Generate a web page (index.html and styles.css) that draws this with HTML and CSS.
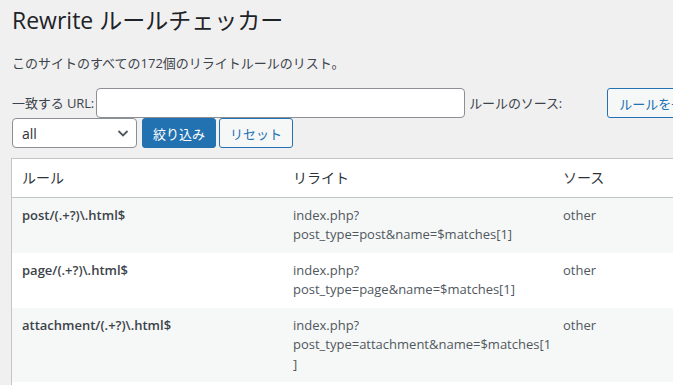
FILE: index.html
```html
<!DOCTYPE html>
<html lang="ja">
<head>
  <meta charset="UTF-8" />
  <title>Rewrite ルールチェッカー</title>
  <link rel="stylesheet" href="styles.css">
</head>
<body>
  <div class="wrap">
    <h1>Rewrite ルールチェッカー</h1>
    <p class="intro">このサイトのすべての172個のリライトルールのリスト。</p>

    <form class="filters">
      <div class="row">
        <label for="url">一致する URL:</label>
        <input type="text" id="url" class="url-input">
        <label for="source" class="source-label">ルールのソース:</label>
        <button type="button" class="btn btn-secondary btn-flush">ルールを一新</button>
      </div>
      <div class="row">
        <div class="select-box">
          <select id="source">
            <option>all</option>
          </select>
          <svg class="chevron" width="16" height="16" viewBox="0 0 16 16"><path d="M3.5 6 L8 10.5 L12.5 6" fill="none" stroke="#50575e" stroke-width="1.8"/></svg>
        </div>
        <button type="button" class="btn btn-primary">絞り込み</button>
        <button type="button" class="btn btn-secondary">リセット</button>
      </div>
    </form>

    <table class="rules">
      <thead>
        <tr>
          <th class="col-rule">ルール</th>
          <th class="col-rewrite">リライト</th>
          <th class="col-source">ソース</th>
        </tr>
      </thead>
      <tbody>
        <tr class="alt">
          <td class="rule">post/(.+?)\.html$</td>
          <td>index.php?<br>post_type=post&amp;name=$matches[1]</td>
          <td>other</td>
        </tr>
        <tr>
          <td class="rule">page/(.+?)\.html$</td>
          <td>index.php?<br>post_type=page&amp;name=$matches[1]</td>
          <td>other</td>
        </tr>
        <tr class="alt">
          <td class="rule">attachment/(.+?)\.html$</td>
          <td>index.php?<br>post_type=attachment&amp;name=$matches[1<br>]</td>
          <td>other</td>
        </tr>
        <tr>
          <td class="rule">&nbsp;</td>
          <td>&nbsp;</td>
          <td>&nbsp;</td>
        </tr>
      </tbody>
    </table>
  </div>
</body>
</html>
```

FILE: styles.css
```css
html, body {
  margin: 0;
  padding: 0;
  overflow: hidden;
}
body {
  background: #f0f0f1;
  color: #3c434a;
  font-family: "Open Sans", "Noto Sans CJK JP", sans-serif;
  font-size: 13px;
  line-height: 1.4;
}
.wrap {
  padding: 0 0 0 11px;
  width: 900px;
}
h1 {
  font-size: 23px;
  font-weight: 400;
  color: #1d2327;
  margin: 0;
  padding: 6px 0 0 1px;
  line-height: 1.3;
}
.intro {
  margin: 18px 0 0 1px;
}
.filters {
  margin: 16px 0 0 1px;
}
.row {
  display: flex;
  align-items: center;
}
.row label {
  margin-right: 2px;
  letter-spacing: -0.1px;
}
.url-input {
  width: 369px;
  height: 30px;
  box-sizing: border-box;
  border: 1px solid #8c8f94;
  border-radius: 4px;
  background: #fff;
  margin: 0 4px 0 0;
}
.source-label {
  width: 136px;
}
.select-box {
  position: relative;
  width: 125px;
  height: 30px;
}
.select-box select {
  appearance: none;
  width: 100%;
  height: 30px;
  box-sizing: border-box;
  border: 1px solid #8c8f94;
  border-radius: 4px;
  background: #fff;
  color: #2c3338;
  font-family: inherit;
  font-size: 14px;
  padding: 0 24px 0 9px;
}
.chevron {
  position: absolute;
  right: 6px;
  top: 7px;
  pointer-events: none;
}
.btn {
  height: 30px;
  box-sizing: border-box;
  border-radius: 3px;
  font-family: inherit;
  font-size: 13px;
  padding: 0 10px;
  border: 1px solid #2271b1;
  cursor: pointer;
  width: 74px;
}
.btn-primary {
  background: #2271b1;
  color: #fff;
  margin-left: 5px;
}
.btn-secondary {
  background: #f6f7f7;
  color: #2271b1;
  margin-left: 3px;
}
.btn-flush {
  width: auto;
  margin-left: 0;
  padding: 0 11px;
}
.rules {
  margin-top: 10px;
  border-collapse: collapse;
  border: 1px solid #c3c4c7;
  background: #fff;
  width: 900px;
  table-layout: fixed;
}
.rules th {
  text-align: left;
  font-weight: 400;
  font-size: 14px;
  color: #2c3338;
  padding: 9px 10px;
  line-height: 1.4;
  border-bottom: 1px solid #c3c4c7;
}
.col-rule { width: 251px; }
.col-rewrite { width: 250px; }
.rules td {
  vertical-align: top;
  padding: 8px 10px;
  line-height: 1.5;
  color: #50575e;
}
.rules tr.alt td {
  background: #f6f7f7;
}
.rules td.rule {
  font-weight: 600;
  color: #3c434a;
}
```
